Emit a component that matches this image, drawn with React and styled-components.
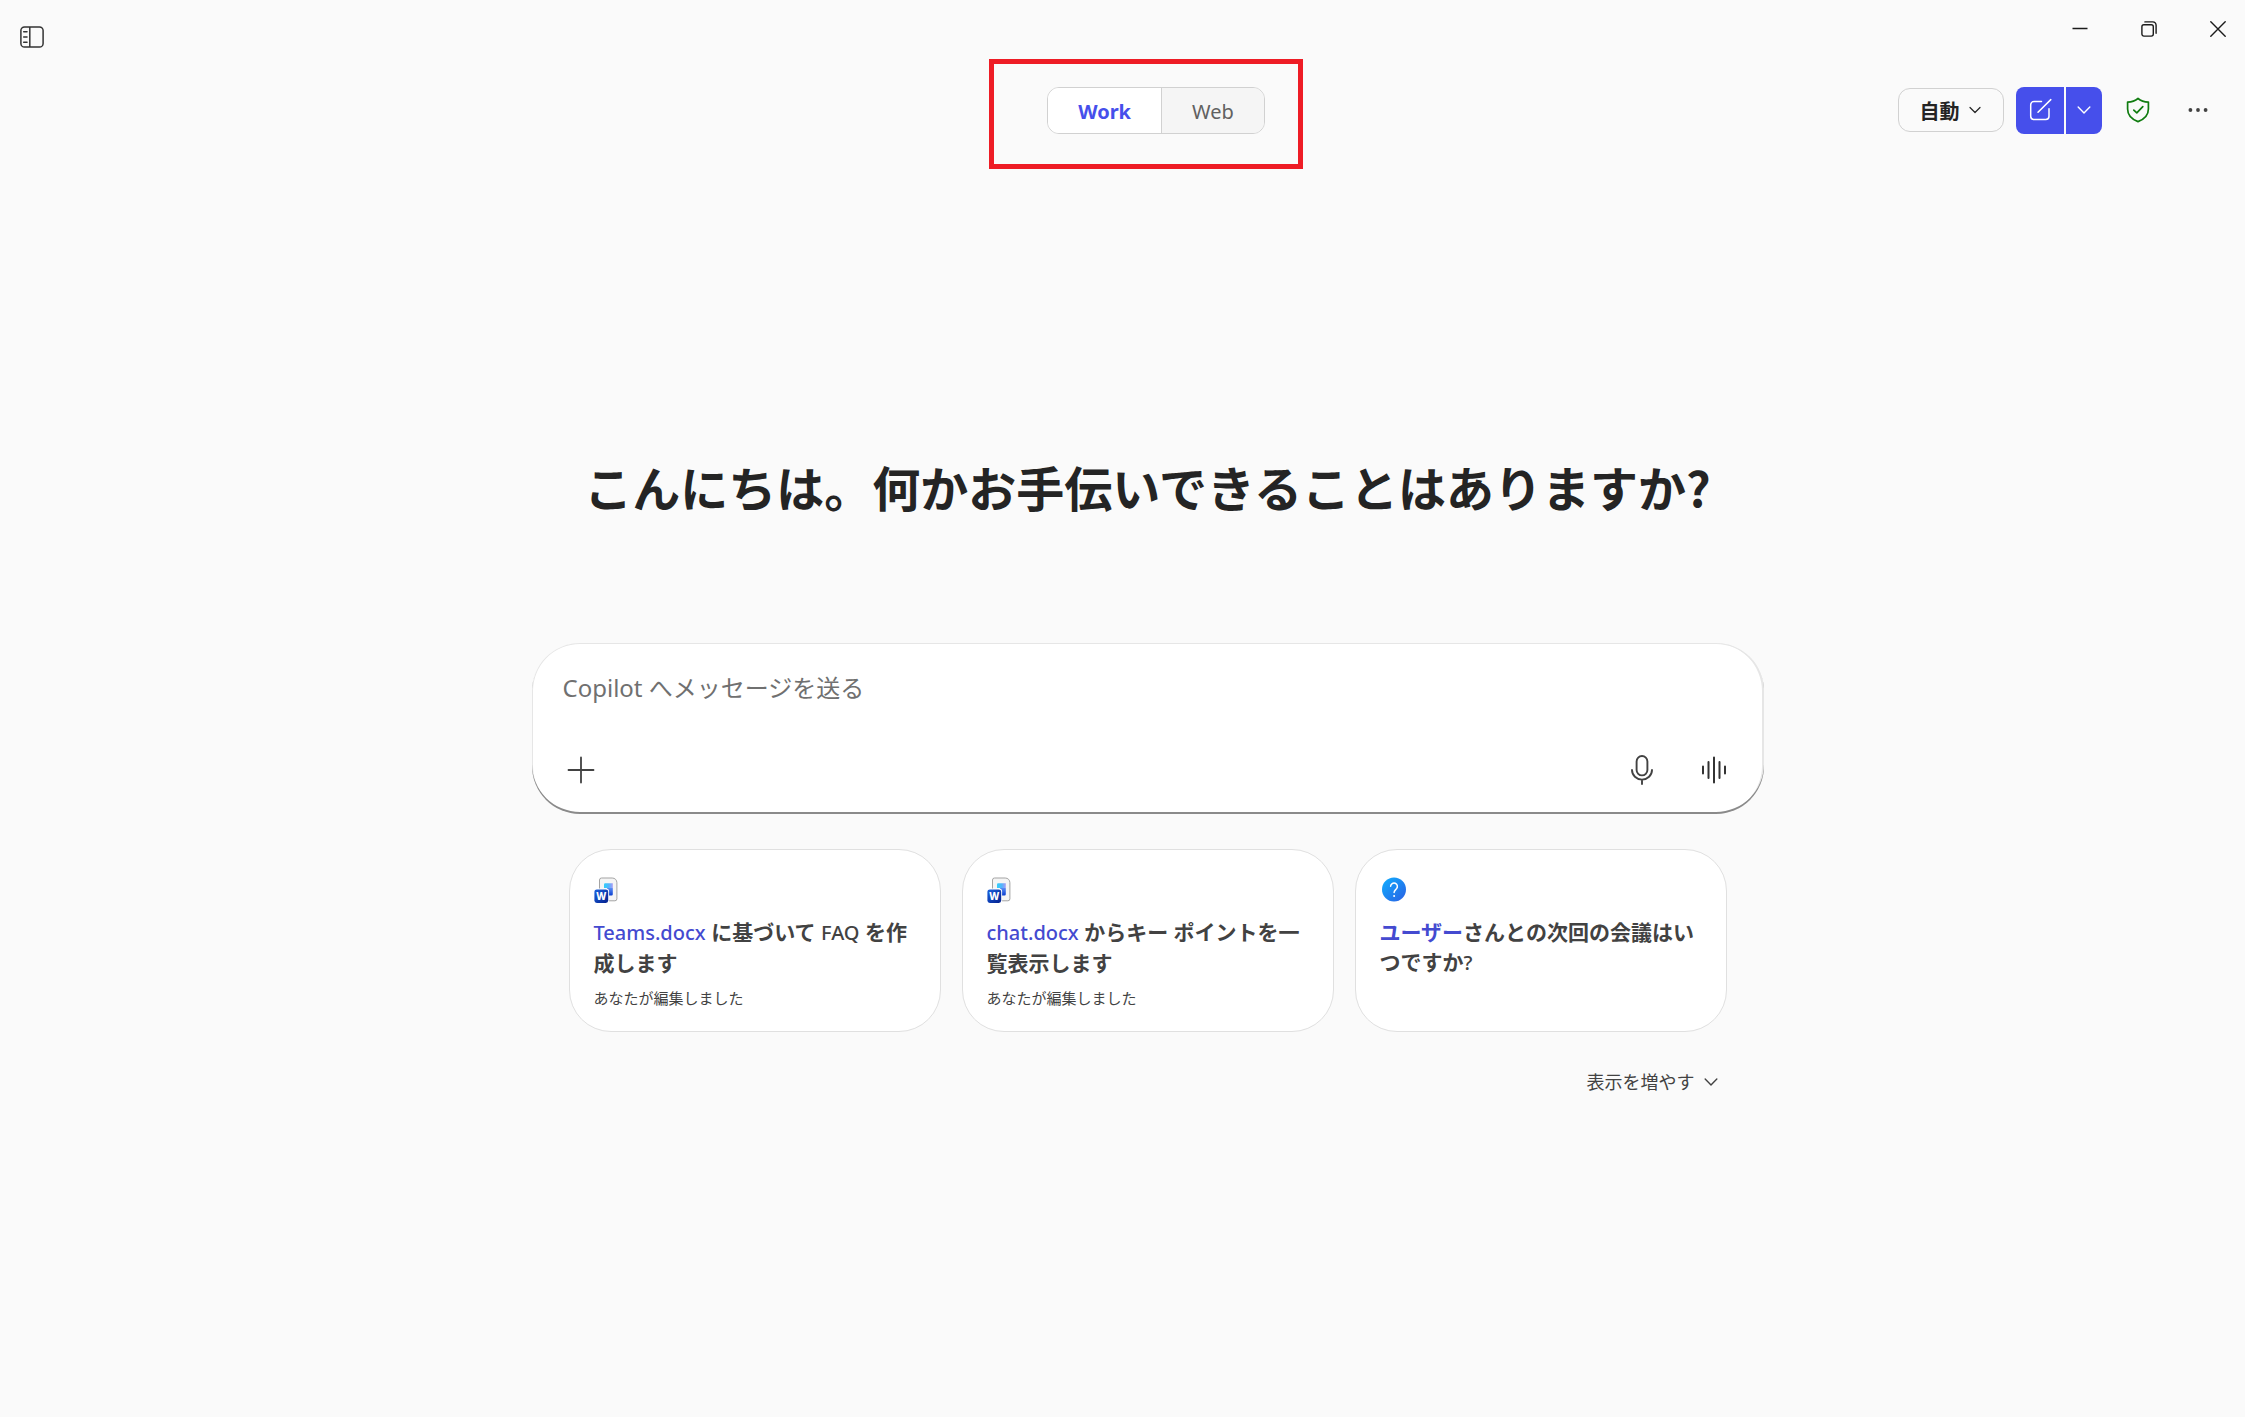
import React, { useState } from "react";
import styled, { createGlobalStyle } from "styled-components";

const GlobalStyle = createGlobalStyle`
  * {
    box-sizing: border-box;
  }
  body {
    margin: 0;
    background: #fafafa;
    color: #242424;
    font-family: "Noto Sans", "Noto Sans CJK JP", sans-serif;
  }
  button, textarea {
    font-family: inherit;
  }
`;

function Chevron({ width = 12 }) {
  return (
    <svg width={width} height={width} viewBox="0 0 12 12" fill="none">
      <path
        d="M1 3.5 6 8.5 11 3.5"
        stroke="currentColor"
        strokeWidth="1.2"
        strokeLinecap="round"
        strokeLinejoin="round"
      />
    </svg>
  );
}

function PanelIcon() {
  return (
    <svg width="24" height="22" viewBox="0 0 24 22" fill="none" stroke="#333" strokeWidth="1.5">
      <rect x="0.9" y="0.9" width="22.2" height="20.2" rx="3.6" />
      <path d="M9.8 1V21" />
      <path d="M3.7 5.8H7M3.7 11H7M3.7 16.2H7" strokeLinecap="round" />
    </svg>
  );
}

function WordIcon() {
  return (
    <svg width="24" height="26" viewBox="0 0 24 26">
      <defs>
        <linearGradient id="wordTop" x1="0" y1="0" x2="1" y2="0">
          <stop offset="0" stopColor="#2fd0fb" />
          <stop offset="0.55" stopColor="#55b4fb" />
          <stop offset="1" stopColor="#a99cf5" />
        </linearGradient>
        <linearGradient id="wordSide" x1="0" y1="0" x2="0" y2="1">
          <stop offset="0" stopColor="#5b8df5" />
          <stop offset="1" stopColor="#0a3fd0" />
        </linearGradient>
        <linearGradient id="wordBadge" x1="0" y1="0" x2="1" y2="1">
          <stop offset="0" stopColor="#1c63e0" />
          <stop offset="1" stopColor="#031f8c" />
        </linearGradient>
      </defs>
      <path
        d="M7.5 1H18.2C20.9 1 22.9 3 22.9 5.7V21.8A2 2 0 0 1 20.9 23.8H7.5A2 2 0 0 1 5.5 21.8V3A2 2 0 0 1 7.5 1Z"
        fill="#f5f5f5"
        stroke="#a3a3a3"
        strokeLinejoin="round"
      />
      <path d="M10 7.5A1.2 1.2 0 0 1 11.2 6.3H18.8V11H10Z" fill="url(#wordTop)" />
      <path d="M13 11H18.8V17.2A1.2 1.2 0 0 1 17.6 18.4H13Z" fill="url(#wordSide)" />
      <rect x="-0.5" y="11.5" width="15.6" height="15" rx="3" fill="#fff" />
      <rect x="0.4" y="12.4" width="13.8" height="13.6" rx="2.4" fill="url(#wordBadge)" />
      <text x="7.3" y="23" textAnchor="middle" fontSize="10" fontWeight="800" fill="#fff">
        W
      </text>
    </svg>
  );
}

function QuestionIcon() {
  return (
    <svg width="26" height="26" viewBox="0 0 26 26">
      <defs>
        <linearGradient id="ask" x1="0" y1="0" x2="1" y2="1">
          <stop offset="0" stopColor="#0fafff" />
          <stop offset="1" stopColor="#2b5fe3" />
        </linearGradient>
      </defs>
      <circle cx="14" cy="12.5" r="12" fill="url(#ask)" />
      <path
        d="M10.6 9.3A3.4 3.4 0 1 1 16.5 11.7C15.2 13 14.1 13.6 14.1 15.6"
        fill="none"
        stroke="#fff"
        strokeWidth="1.5"
        strokeLinecap="round"
      />
      <circle cx="14.1" cy="18.9" r="1" fill="#fff" />
    </svg>
  );
}

function App() {
  const [mode, setMode] = useState("work");
  return (
    <Page>
      <GlobalStyle />
      <TitleBar>
        <IconButton aria-label="サイドバー">
          <PanelIcon />
        </IconButton>
        <WindowControls>
          <IconButton aria-label="最小化">
            <svg width="16" height="16" viewBox="0 0 16 16" stroke="#1b1b1b" strokeWidth="1.5">
              <path d="M0.5 7.5H15.5" />
            </svg>
          </IconButton>
          <IconButton aria-label="元に戻す">
            <svg width="16" height="16" viewBox="0 0 16 16" fill="none" stroke="#1b1b1b" strokeWidth="1.4">
              <rect x="0.9" y="3.7" width="11.4" height="11.4" rx="2" />
              <path d="M3.9 0.9H11.6A3.6 3.6 0 0 1 15.1 4.5V12.2" strokeLinecap="round" />
            </svg>
          </IconButton>
          <IconButton aria-label="閉じる">
            <svg width="16" height="16" viewBox="0 0 16 16" stroke="#1b1b1b" strokeWidth="1.4">
              <path d="M0.8 0.8 15.2 15.2M15.2 0.8 0.8 15.2" strokeLinecap="round" />
            </svg>
          </IconButton>
        </WindowControls>
      </TitleBar>

      <Header>
        <Highlight>
          <Toggle>
            <ToggleButton $active={mode === "work"} onClick={() => setMode("work")}>
              Work
            </ToggleButton>
            <ToggleButton $active={mode === "web"} onClick={() => setMode("web")}>
              Web
            </ToggleButton>
          </Toggle>
        </Highlight>
        <Actions>
          <AutoButton>
            自動
            <Chevron />
          </AutoButton>
          <SplitButton>
            <NewChat aria-label="新しいチャット">
              <svg width="24" height="24" viewBox="0 0 24 24" fill="none" stroke="#fff" strokeWidth="1.5" strokeLinecap="round">
                <path d="M13.5 3.6H5.9A3.2 3.2 0 0 0 2.7 6.8V18.3A3.2 3.2 0 0 0 5.9 21.5H17.8A3.2 3.2 0 0 0 21 18.3V10.7" />
                <path d="M10 14.2 22.8 1.6" />
              </svg>
            </NewChat>
            <NewChatMenu aria-label="その他の新規作成">
              <Chevron width={14} />
            </NewChatMenu>
          </SplitButton>
          <IconButton aria-label="保護">
            <svg width="24" height="26" viewBox="0 0 24 26" fill="none" stroke="#107c10" strokeWidth="1.7" strokeLinecap="round" strokeLinejoin="round">
              <path d="M12 1.5C9.2 3.9 5.9 5 1.6 5.1V12C1.6 18 5.7 22.2 12 24.6C18.3 22.2 22.4 18 22.4 12V5.1C18.1 5 14.8 3.9 12 1.5Z" />
              <path d="M7.8 13.1 10.8 15.9 16.8 9.7" />
            </svg>
          </IconButton>
          <IconButton aria-label="その他">
            <svg width="20" height="20" viewBox="0 0 20 20" fill="#424242">
              <circle cx="2.4" cy="10" r="1.9" />
              <circle cx="10" cy="10" r="1.9" />
              <circle cx="17.6" cy="10" r="1.9" />
            </svg>
          </IconButton>
        </Actions>
      </Header>

      <Main>
        <Greeting>こんにちは。何かお手伝いできることはありますか?</Greeting>
        <Composer>
          <Message rows={1} aria-label="メッセージ" placeholder="Copilot へメッセージを送る" />
          <Tools>
            <IconButton aria-label="追加">
              <svg width="28" height="28" viewBox="0 0 28 28" stroke="#424242" strokeWidth="1.8" strokeLinecap="round">
                <path d="M14 1.5V26.5M1.5 14H26.5" />
              </svg>
            </IconButton>
            <VoiceTools>
              <IconButton aria-label="音声入力">
                <svg width="24" height="30" viewBox="0 0 24 30" fill="none" stroke="#424242" strokeWidth="1.9" strokeLinecap="round">
                  <rect x="6.6" y="1" width="10.8" height="19.4" rx="5.4" />
                  <path d="M2 15A10 9.6 0 0 0 22 15M12 24.6V29" />
                </svg>
              </IconButton>
              <IconButton aria-label="音声チャット">
                <svg width="26" height="28" viewBox="0 0 26 28" stroke="#333" strokeWidth="2" strokeLinecap="round">
                  <path d="M2 10.5V17.5M7.5 6V22M13 1.5V26.5M18.5 6V22M24 10.5V17.5" />
                </svg>
              </IconButton>
            </VoiceTools>
          </Tools>
        </Composer>

        <Cards>
          <Card>
            <WordIcon />
            <CardTitle>
              <Latin $link>Teams.docx</Latin> に基づいて <Latin>FAQ</Latin> を作成します
            </CardTitle>
            <Note>あなたが編集しました</Note>
          </Card>
          <Card>
            <WordIcon />
            <CardTitle>
              <Latin $link>chat.docx</Latin> からキー ポイントを一覧表示します
            </CardTitle>
            <Note>あなたが編集しました</Note>
          </Card>
          <Card>
            <QuestionIcon />
            <CardTitle>
              <Name>ユーザー</Name>さんとの次回の会議はいつですか<Latin>?</Latin>
            </CardTitle>
          </Card>
        </Cards>
        <ShowMore>
          表示を増やす
          <Chevron width={14} />
        </ShowMore>
      </Main>
    </Page>
  );
}

export default App;

const Page = styled.div`
  min-height: 100vh;
`;

const TitleBar = styled.div`
  display: flex;
  justify-content: space-between;
  align-items: flex-start;
  height: 59px;
  padding: 5px 3px 0 8px;
`;

const WindowControls = styled.div`
  display: flex;
  gap: 21px;
  margin-top: -8px;
`;

const IconButton = styled.button`
  display: flex;
  align-items: center;
  justify-content: center;
  width: 48px;
  height: 64px;
  padding: 0;
  border: none;
  background: transparent;
  cursor: pointer;
`;

const Header = styled.header`
  display: grid;
  grid-template-columns: 1fr auto 1fr;
  padding: 0 23px 0 70px;
`;

const Highlight = styled.div`
  grid-column: 2;
  border: 5px solid #ee1c25;
  padding: 23px 33px 30px 53px;
`;

const Toggle = styled.div`
  display: flex;
  height: 47px;
  border: 1px solid #d1d1d1;
  border-radius: 12px;
  overflow: hidden;
`;

const ToggleButton = styled.button`
  padding: 2px 30px 0;
  border: none;
  font-size: 20px;
  font-weight: ${(props) => (props.$active ? 700 : 400)};
  color: ${(props) => (props.$active ? "#464feb" : "#616161")};
  background: ${(props) => (props.$active ? "#fff" : "#f5f5f5")};
  cursor: pointer;

  & + & {
    border-left: 1px solid #d1d1d1;
  }
`;

const Actions = styled.div`
  display: flex;
  align-items: center;
  justify-content: flex-end;
  gap: 12px;
  height: 102px;
`;

const AutoButton = styled.button`
  display: flex;
  align-items: center;
  justify-content: center;
  gap: 9px;
  width: 106px;
  height: 44px;
  padding: 0 2px 0 0;
  border: 1px solid #d1d1d1;
  border-radius: 12px;
  background: transparent;
  color: #242424;
  font-size: 20px;
  font-weight: 700;
  cursor: pointer;
`;

const SplitButton = styled.div`
  display: flex;
  gap: 2px;
  height: 47px;
  border-radius: 8px;
  overflow: hidden;
`;

const NewChat = styled.button`
  display: flex;
  align-items: center;
  justify-content: center;
  width: 48px;
  padding: 0;
  border: none;
  background: #464feb;
  color: #fff;
  cursor: pointer;
`;

const NewChatMenu = styled(NewChat)`
  width: 36px;
`;

const Main = styled.main`
  display: flex;
  flex-direction: column;
  align-items: center;
  padding: 281px 25px 48px 75px;
`;

const Greeting = styled.h1`
  margin: 0 0 121px;
  font-family: "Noto Sans CJK JP", sans-serif;
  font-size: 48px;
  line-height: 72px;
  font-weight: 700;
`;

const Composer = styled.div`
  width: 100%;
  max-width: 1232px;
  padding: 25px 26px 12px 29px;
  border-radius: 48px;
  background: #fff;
  box-shadow: inset 0 -2px 0 #8a8a8a, inset -2px 0 0 #e6e6e6,
    inset 0 0 0 1px #e6e6e6;
`;

const Message = styled.textarea`
  display: block;
  width: 100%;
  height: 40px;
  padding: 0 2px;
  border: none;
  outline: none;
  resize: none;
  background: transparent;
  font-size: 24px;
  line-height: 40px;

  &::placeholder {
    color: #707070;
    opacity: 1;
  }
`;

const Tools = styled.div`
  display: flex;
  justify-content: space-between;
  margin-top: 30px;
  margin-left: -4px;
`;

const VoiceTools = styled.div`
  display: flex;
  gap: 24px;
`;

const Cards = styled.div`
  display: grid;
  grid-template-columns: repeat(3, 1fr);
  gap: 21px;
  width: 100%;
  max-width: 1158px;
  margin-top: 35px;
`;

const Card = styled.button`
  display: flex;
  flex-direction: column;
  align-items: flex-start;
  min-height: 183px;
  padding: 27px 24px 20px;
  border: 1px solid #e0e0e0;
  border-radius: 42px;
  background: #fff;
  color: #424242;
  text-align: left;
  cursor: pointer;
`;

const CardTitle = styled.span`
  margin-top: 14px;
  font-size: 21px;
  line-height: 30px;
  font-weight: 600;
`;

const Name = styled.span`
  color: #444ad0;
`;

/* latin words sit a step lighter than the kana around them */
const Latin = styled.span`
  font-size: 20px;
  font-weight: 500;
  color: ${(props) => (props.$link ? "#444ad0" : "inherit")};
`;

const Note = styled.span`
  margin-top: 8px;
  font-size: 15px;
  line-height: 24px;
`;

const ShowMore = styled.button`
  display: flex;
  align-items: center;
  justify-content: flex-end;
  gap: 9px;
  width: 100%;
  max-width: 1158px;
  margin-top: 32px;
  padding: 0 9px;
  border: none;
  background: transparent;
  color: #424242;
  font-size: 18px;
  line-height: 36px;
  cursor: pointer;
`;
